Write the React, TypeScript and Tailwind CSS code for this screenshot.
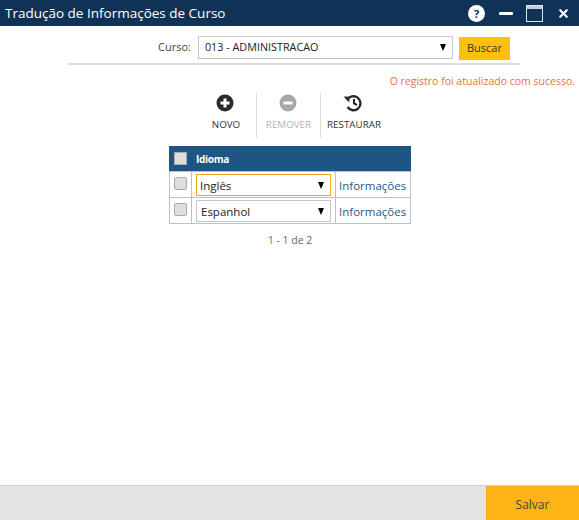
import React from 'react';
import { X } from 'lucide-react';

const font = "font-['Open_Sans',sans-serif]";

function Arrow() {
  return <span className="w-0 h-0 border-l-[3.5px] border-r-[3.5px] border-t-[7px] border-l-transparent border-r-transparent border-t-black" />;
}

function Check({ className = '' }: { className?: string }) {
  return <span className={`block w-[13px] h-[13px] rounded-[2px] border border-[#aaaaaa] bg-[#dedede] ${className}`} />;
}

function ToolButton({ label, disabled, iconClass, children }: { label: string; disabled?: boolean; iconClass: string; children: React.ReactNode }) {
  return (
    <div className="flex flex-col items-center justify-start pt-[1px] h-[45px]">
      <div className={`h-[18px] ${iconClass}`}>{children}</div>
      <span className={`text-[9.8px] leading-[12px] mt-[7px] ${disabled ? 'text-[#b5b5b5]' : 'text-[#333333]'}`}>{label}</span>
    </div>
  );
}

function LangRow({ name, active, indent }: { name: string; active?: boolean; indent: string }) {
  return (
    <div className="flex h-[26px] border-b border-[#b4c4c8]">
      <div className="w-[22px] border-r border-[#b4c4c8] pl-[4px] pt-[5px]">
        <Check />
      </div>
      <div className="w-[144px] border-r border-[#b4c4c8] pl-[4px] pt-[2px]">
        <div className={`w-[135px] h-[22px] border flex items-center justify-between bg-white pr-[6px] text-[11.5px] text-[#222222] ${indent} ${active ? 'border-[#f5a81c]' : 'border-[#c4c8c8]'}`}>
          <span className="pt-[1px]">{name}</span>
          <Arrow />
        </div>
      </div>
      <div className="flex-1 pl-[3px] pt-[6px] text-[11.5px] leading-[16px] text-[#1f5a8a]">Informações</div>
    </div>
  );
}

export default function App() {
  return (
    <div className={`${font} w-[579px] h-[520px] bg-white flex flex-col overflow-hidden`}>
      {/* Cabeçalho */}
      <div className="h-[26px] bg-[#0f3256] flex items-center justify-between pl-[5px]">
        <span className="text-white text-[13.5px]">Tradução de Informações de Curso</span>
        <div className="flex items-center">
          <span className="w-[17px] h-[17px] rounded-full bg-white flex items-center justify-center text-[#0f3256] text-[11px] font-bold leading-none">?</span>
          <span className="w-[14px] h-[3px] bg-white ml-[14px] rounded-[1px]" />
          <span className="w-[17px] h-[17px] border border-[#e0e4ea] ml-[13px] bg-[#0f3256] flex flex-col">
            <span className="h-[3px] bg-[#c4ccd6]" />
          </span>
          <X size={13} strokeWidth={4} className="text-white ml-[14px] mr-[9px]" />
        </div>
      </div>

      <div className="flex-1 flex flex-col">
        {/* Filtro de curso */}
        <div className="flex items-start pt-[10px] ml-[68px] w-[452px] h-[39px] border-b-2 border-[#dddddd]">
          <span className="ml-[90px] mt-[3px] text-[11px] leading-[16px] text-[#444444]">Curso:</span>
          <div className="ml-[7px] w-[255px] h-[23px] border border-[#c8c8c8] flex items-center justify-between pl-[6px] pr-[6px] text-[10.8px] text-[#222222]">
            <span>013 - ADMINISTRACAO</span>
            <Arrow />
          </div>
          <div className="ml-[6px] mt-[1px] w-[51px] h-[23px] bg-[#fdc010] flex items-center justify-center text-[11px] text-[#333333]">Buscar</div>
        </div>

        <div className="text-right pr-[4px] mt-[8px] text-[10.5px] leading-[16px] text-[#e8743b]">O registro foi atualizado com sucesso.</div>

        {/* Barra de ações */}
        <div className="flex mt-[4px] ml-[197px]">
          <div className="w-[60px] border-r border-[#dddddd] pr-[1px]">
            <ToolButton label="NOVO" iconClass="-ml-[3px]">
              <svg width="18" height="18" viewBox="0 0 18 18">
                <circle cx="9" cy="9" r="8.5" fill="#2a2a2a" />
                <path d="M9 4.5v9M4.5 9h9" stroke="#fff" strokeWidth="3" />
              </svg>
            </ToolButton>
          </div>
          <div className="w-[64px] border-r border-[#dddddd]">
            <ToolButton label="REMOVER" disabled iconClass="-ml-[2px]">
              <svg width="18" height="18" viewBox="0 0 18 18">
                <circle cx="9" cy="9" r="8.5" fill="#a8a8a8" />
                <path d="M4.5 9h9" stroke="#fff" strokeWidth="3" />
              </svg>
            </ToolButton>
          </div>
          <div className="w-[66px]">
            <ToolButton label="RESTAURAR" iconClass="-ml-[3px]">
              <svg width="19" height="18" viewBox="0 0 19 18" fill="none">
                <path d="M4.2 6.2A7 7 0 1 1 4.6 13" stroke="#2a2a2a" strokeWidth="2.4" />
                <path d="M0.5 2.5 L6.5 2.8 L6.3 8.5 Z" fill="#2a2a2a" />
                <path d="M11 5v4.5l3 1.5" stroke="#2a2a2a" strokeWidth="2" />
              </svg>
            </ToolButton>
          </div>
        </div>

        {/* Tabela de idiomas */}
        <div className="ml-[169px] mt-[8px] w-[242px] border-l border-r border-[#b4c4c8]">
          <div className="h-[26px] -mx-[1px] bg-[#1c5586] border-b border-[#b4c4c8] flex items-center pl-[5px]">
            <Check className="w-[12px] h-[12px] rounded-none" />
            <span className="ml-[9px] pt-[1px] text-[10px] tracking-[-0.3px] font-bold text-white">Idioma</span>
          </div>
          <LangRow name="Inglês" active indent="pl-[3px]" />
          <LangRow name="Espanhol" indent="pl-[4px]" />
        </div>

        <div className="w-[242px] ml-[169px] mt-[8px] text-center text-[10.5px] leading-[16px] text-[#666666]">1 - 1 de 2</div>
      </div>

      {/* Rodapé */}
      <div className="h-[35px] bg-[#e3e3e3] border-t border-[#d0d0d0] flex justify-end">
        <div className="w-[93px] bg-[#fdb515] flex items-center justify-center pt-[4px] text-[12px] text-[#444444]">Salvar</div>
      </div>
    </div>
  );
}
